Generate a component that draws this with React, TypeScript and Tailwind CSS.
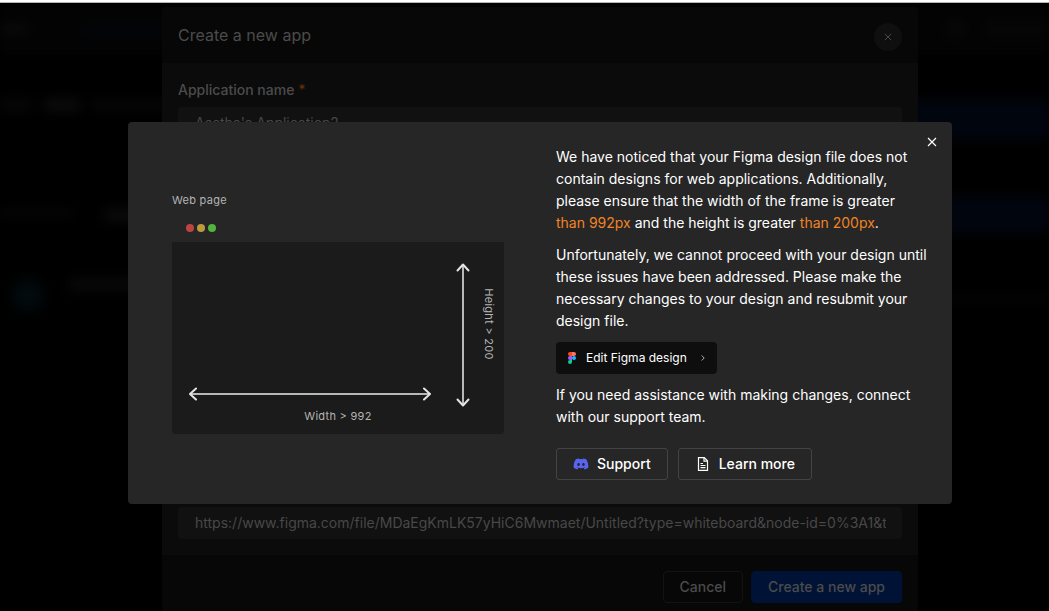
import React from "react";
import { FaDiscord } from "react-icons/fa";

function CloseIcon({ size }: { size: number }) {
  return (
    <svg width={size} height={size} viewBox="0 0 10 10" fill="none" stroke="currentColor" strokeWidth="1.2" aria-hidden="true">
      <path d="M1 1l8 8M9 1l-8 8" />
    </svg>
  );
}

function FigmaIcon() {
  return (
    <svg width="8" height="12" viewBox="0 0 8 12" aria-hidden="true">
      <path d="M2 0h2v4H2a2 2 0 010-4z" fill="#f24e1e" />
      <path d="M4 0h2a2 2 0 010 4H4z" fill="#ff7262" />
      <path d="M2 4h2v4H2a2 2 0 010-4z" fill="#a259ff" />
      <circle cx="6" cy="6" r="2" fill="#1abcfe" />
      <path d="M2 8h2v2a2 2 0 11-2-2z" fill="#0acf83" />
    </svg>
  );
}

function DocumentIcon() {
  return (
    <svg width="16" height="16" viewBox="0 0 16 16" fill="none" stroke="currentColor" strokeWidth="1.2" aria-hidden="true">
      <path d="M3.500 1.600h5.800l3.200 3.200v9.600h-9z" />
      <path d="M9 1.600v3.500h3.500M5.500 7.500h2.500M5.500 9.500h5M5.500 11.700h5" />
    </svg>
  );
}

function FrameSizeFigure() {
  return (
    <figure className="flex w-[332px] shrink-0 flex-col text-[#b4b4b4]">
      <figcaption className="text-[11px] leading-4 tracking-wide">Web page</figcaption>
      <div className="mt-1.5 flex h-7 items-center gap-[3px] pl-3.5">
        <span className="size-2 rounded-full bg-[#bd4441]" />
        <span className="size-2 rounded-full bg-[#bb9b3e]" />
        <span className="size-2 rounded-full bg-[#50b53f]" />
      </div>
      <svg
        viewBox="0 0 332 192"
        className="block h-48 w-full rounded-b bg-[#1b1b1b] font-['Inter',sans-serif] text-[11px] tracking-wide"
        role="img"
        aria-label="Minimum frame size"
      >
        <g fill="none" strokeWidth="2">
          <path d="M19 152h238M291 24v138" stroke="#b8b8b8" />
          <g stroke="#e4e4e4" strokeLinecap="round" strokeLinejoin="round">
            <path d="M24 146.500L18 152l6 5.500M252 146.500l6 5.500-6 5.500" />
            <path d="M285.500 28.500L291 22.500l5.500 6M285.500 157.500l5.500 6 5.500-6" />
          </g>
        </g>
        <text x="166" y="178" textAnchor="middle" fill="#b4b4b4">Width &gt; 992</text>
        <text transform="translate(313 82) rotate(90)" textAnchor="middle" fill="#b4b4b4">Height &gt; 200</text>
      </svg>
    </figure>
  );
}

function Backdrop() {
  return (
    <div aria-hidden="true" className="col-start-1 row-start-1 flex min-w-0 flex-col overflow-hidden">
      <div className="flex flex-1 flex-col blur-[6px]">
        <div className="flex h-13 shrink-0 items-center justify-between bg-[#030303]">
          <div className="flex items-center gap-14">
            <span className="h-2 w-7 bg-[#0b0b0b]" />
            <span className="h-3 w-20 bg-[#020509]" />
          </div>
          <div className="flex items-center gap-5">
            <span className="size-5 rounded-full bg-[#070707]" />
            <span className="h-4 w-16 bg-[#060606]" />
          </div>
        </div>
        <div className="mt-11 flex h-10 shrink-0 items-start justify-between">
          <div className="flex gap-3">
            <span className="h-3 w-8 bg-[#070707]" />
            <span className="h-3 w-9 bg-[#0c0c0c]" />
            <span className="h-3 w-20 bg-[#060606]" />
          </div>
          <span className="h-10 w-40 bg-[#01050e]" />
        </div>
        <div className="mt-14 flex h-10 shrink-0 items-center justify-between">
          <div className="flex gap-8">
            <span className="h-2 w-18 bg-[#060606]" />
            <span className="h-3 w-9 bg-[#0b0b0b]" />
          </div>
          <span className="h-9 w-40 bg-[#01050e]" />
        </div>
        <div className="mt-11 flex items-start justify-between pl-3">
          <div className="flex gap-6">
            <span className="size-8 rounded-full bg-[#020a0d]" />
            <span className="h-3 w-20 bg-[#090909]" />
          </div>
          <span className="mt-4 h-2 w-40 bg-[#040404]" />
        </div>
      </div>
    </div>
  );
}

const fieldClass = "h-8 w-full rounded bg-[#111111] pb-0.5 pl-[17px] pr-4 text-sm text-[#484848] outline-none";

function CreateAppDialog() {
  return (
    <section
      role="dialog"
      aria-labelledby="create-title"
      className="z-10 col-start-1 row-start-1 ml-[31px] mt-1 flex w-[756px] max-w-full flex-col justify-self-center overflow-hidden rounded-t bg-[#0b0b0b] text-[#4b4b4b]"
    >
      <header className="flex items-start justify-between bg-[#070707] px-4 pb-3 pt-4">
        <h1 id="create-title" className="text-base leading-6">Create a new app</h1>
        <button type="button" aria-label="Close create dialog" className="flex size-7 items-center justify-center rounded-full bg-[#0f0f0f]">
          <CloseIcon size={8} />
        </button>
      </header>
      <form className="flex flex-1 flex-col justify-between p-4">
        <div className="flex flex-col gap-1.5">
          <label htmlFor="app-name" className="text-sm font-medium leading-[22px]">
            Application name <span className="text-[#5e2d0a]">*</span>
          </label>
          <input id="app-name" type="text" defaultValue="Aastha's Application2" className={fieldClass} />
        </div>
        <input
          type="url"
          aria-label="Figma file URL"
          defaultValue="https://www.figma.com/file/MDaEgKmLK57yHiC6Mwmaet/Untitled?type=whiteboard&node-id=0%3A1&t"
          className={fieldClass}
        />
      </form>
      <footer className="flex justify-end gap-2 bg-[#070707] px-4 pb-2 pt-4 text-sm font-medium">
        <button type="button" className="h-8 rounded border border-[#131313] px-4">Cancel</button>
        <button type="button" className="h-8 rounded border border-[#001336] bg-[#001336] px-4">Create a new app</button>
      </footer>
    </section>
  );
}

function FrameSizeDialog() {
  return (
    <section
      role="alertdialog"
      aria-label="Figma design needs changes"
      className="relative flex w-[824px] max-w-full items-center gap-[52px] rounded bg-[#262626] py-6 pl-11 pr-6 text-white"
    >
      <button type="button" aria-label="Close" className="absolute right-3 top-3 flex size-4 items-center justify-center">
        <CloseIcon size={10} />
      </button>
      <FrameSizeFigure />
      <div className="flex flex-1 flex-col items-start gap-2.5 text-sm leading-[22px]">
        <p>
          We have noticed that your Figma design file does not contain designs for web applications. Additionally,
          please ensure that the width of the frame is greater{" "}
          <span className="whitespace-nowrap text-[#f28324]">than 992px</span> and the height is greater{" "}
          <span className="whitespace-nowrap text-[#f28324]">than 200px</span>.
        </p>
        <p>
          Unfortunately, we cannot proceed with your design until these issues have been addressed. Please make the
          necessary changes to your design and resubmit your design file.
        </p>
        <button type="button" className="flex h-8 items-center rounded bg-[#0e0e0e] px-3 text-xs">
          <FigmaIcon />
          <span className="ml-2.5 mr-3.5">Edit Figma design</span>
          <svg width="4" height="6" viewBox="0 0 4 6" fill="none" stroke="#b0b0b0" aria-hidden="true">
            <path d="M.7.5L3.200 3 .7 5.500" />
          </svg>
        </button>
        <p>If you need assistance with making changes, connect with our support team.</p>
        <div className="mt-2.5 flex gap-2.5 font-medium">
          <button type="button" className="flex h-8 items-center gap-2 rounded-[3px] border border-[#434343] px-4">
            <FaDiscord size={16} color="#5865f2" aria-hidden="true" />
            Support
          </button>
          <button type="button" className="flex h-8 items-center gap-2 rounded-[3px] border border-[#434343] px-4">
            <DocumentIcon />
            Learn more
          </button>
        </div>
      </div>
    </section>
  );
}

export default function App() {
  return (
    <main className="flex min-h-screen flex-col bg-black font-['Inter',sans-serif]">
      <div className="h-[3px] border-b border-[#b5b5b5] bg-white" />
      <div className="grid flex-1 grid-cols-1">
        <Backdrop />
        <CreateAppDialog />
      </div>
      <div className="fixed inset-0 z-20 flex items-center justify-center pl-[31px] pt-[15px]">
        <FrameSizeDialog />
      </div>
    </main>
  );
}
